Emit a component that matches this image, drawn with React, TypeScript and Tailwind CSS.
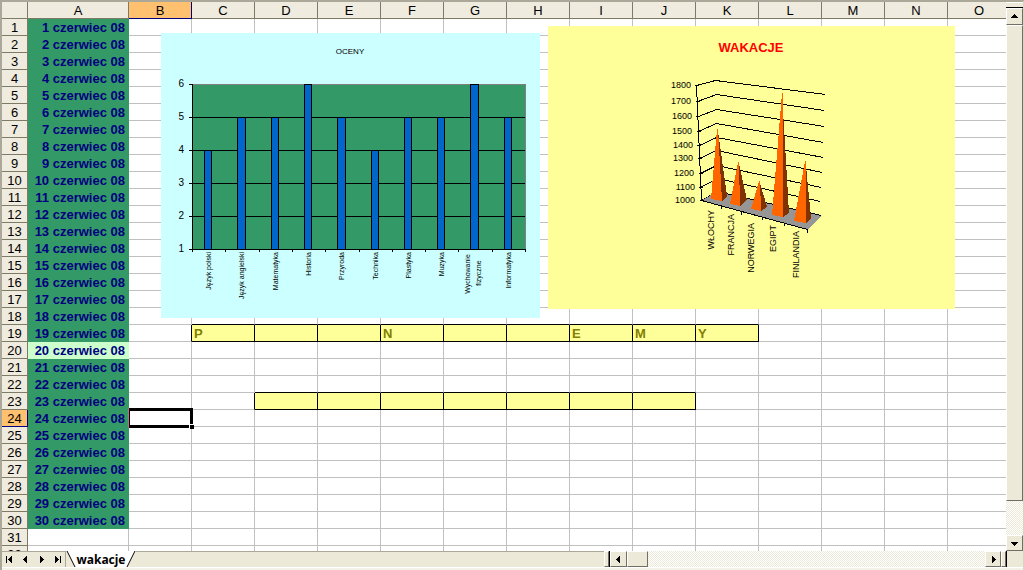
import React from 'react';
import clsx from 'clsx';

const columns = ['A', 'B', 'C', 'D', 'E', 'F', 'G', 'H', 'I', 'J', 'K', 'L', 'M', 'N', 'O'];
const rows = Array.from({ length: 32 }, (_, i) => i + 1);

const letters: Record<string, string> = { C19: 'P', F19: 'N', I19: 'E', J19: 'M', K19: 'Y' };

const grades = [
  { name: 'Język polski', value: 4 },
  { name: 'Język angielski', value: 5 },
  { name: 'Matematyka', value: 5 },
  { name: 'Historia', value: 6 },
  { name: 'Przyroda', value: 5 },
  { name: 'Technika', value: 4 },
  { name: 'Plastyka', value: 5 },
  { name: 'Muzyka', value: 5 },
  { name: 'Wychowanie fizyczne', value: 6 },
  { name: 'Informatyka', value: 5 },
];

// left end, back corner and right end of every grid line
const priceLines = [
  { label: 1800, labelX: 31, y: 15, line: 'M36 15 L55 10 L165 24' },
  { label: 1700, labelX: 31, y: 31, line: 'M37 31 L56 24 L164 40' },
  { label: 1600, labelX: 32, y: 46, line: 'M38 46 L56 39 L164 56' },
  { label: 1500, labelX: 32, y: 61, line: 'M38 61 L56 53 L163 72' },
  { label: 1400, labelX: 33, y: 75, line: 'M39 75 L56 67 L163 87' },
  { label: 1300, labelX: 33, y: 88, line: 'M39 88 L56 80 L162 102' },
  { label: 1200, labelX: 34, y: 103, line: 'M40 103 L56 95 L161 117' },
  { label: 1100, labelX: 35, y: 117, line: 'M40 117 L57 108 L160 131' },
  { label: 1000, labelX: 35, y: 130, line: 'M41 130 L57 121 L160 145' },
];

const pyramids = [
  { front: '57,59 58,59 62,131 51,129', side: '58,61 62,131 67,126' },
  { front: '78,92 79,92 80,136 70,134', side: '79,94 80,136 87,130' },
  { front: '99,111 100,111 101,141 91,139', side: '100,113 101,141 107,137' },
  { front: '122,23 123,23 123,147 112,145', side: '123,40 123,147 129,143' },
  { front: '145,91 146,91 146,153 134,151', side: '146,96 146,153 151,148' },
];

const places = [
  { name: 'WŁOCHY', x: 54, y: 140 },
  { name: 'FRANCJA', x: 74, y: 144 },
  { name: 'NORWEGIA', x: 94, y: 153 },
  { name: 'EGIPT', x: 116, y: 155 },
  { name: 'FINLANDIA', x: 139, y: 161 },
];

function inBand(col: number, row: number) {
  return (row === 19 && col >= 2 && col <= 10) || (row === 23 && col >= 3 && col <= 9);
}

function Cell({ col, row }: { col: number; row: number }) {
  if (col === 0) {
    const dated = row <= 30;
    return (
      <td
        className={clsx(
          'h-[17px] border-r border-b p-0 pt-[2px] pr-[3px] text-right font-bold whitespace-nowrap text-[#000080]',
          dated && row !== 20 && 'border-[#339966] bg-[#339966]',
          row === 20 && 'border-[#ccffcc] bg-[#ccffcc]',
          !dated && 'border-[#c0c0c0]'
        )}
      >
        {dated && `${row} czerwiec 08`}
      </td>
    );
  }
  const band = inBand(col, row);
  return (
    <td
      className={clsx(
        'h-[17px] border-r border-b p-0 pt-[2px] pl-[2px] text-left font-bold text-[#808000]',
        band && 'bg-[#ffff99]',
        band || inBand(col + 1, row) ? 'border-r-black' : 'border-r-[#c0c0c0]',
        band || inBand(col, row + 1) ? 'border-b-black' : 'border-b-[#c0c0c0]',
        col === 1 && row === 24 && 'relative'
      )}
    >
      {letters[columns[col] + row]}
      {col === 1 && row === 24 && (
        <span className="absolute -top-[2px] -right-[2px] -bottom-[2px] left-0 z-10 border-y-[3px] border-r-[3px] border-l border-black shadow-[-1px_0_0_#c8648c]">
          <span className="absolute -right-[4px] -bottom-[4px] size-[5px] border-t border-l border-white bg-black" />
        </span>
      )}
    </td>
  );
}

function Sheet() {
  return (
    <table className="w-[1009px] table-fixed border-separate border-spacing-0 text-[13px] leading-[14px]">
      <colgroup>
        <col className="w-[26px]" />
        <col className="w-[101px]" />
        {columns.slice(1).map(c => (
          <col key={c} className="w-[63px]" />
        ))}
      </colgroup>
      <thead>
        <tr>
          <th className="h-[17px] border-r border-b border-[#7d7b66] bg-[#efebde] p-0" />
          {columns.map(c => (
            <th
              key={c}
              className={clsx(
                'h-[17px] border-r border-b p-0 pt-[2px] text-center font-normal',
                c === 'B' ? 'border-[#000080] bg-[#ffc070]' : 'border-[#7d7b66] bg-[#efebde]'
              )}
            >
              {c}
            </th>
          ))}
        </tr>
      </thead>
      <tbody>
        {rows.map(r => (
          <tr key={r}>
            <th
              className={clsx(
                'h-[17px] border-r border-b p-0 pt-[2px] text-center font-normal',
                r === 24 ? 'border-[#000080] bg-[#ffc070]' : 'border-[#7d7b66] bg-[#efebde]'
              )}
            >
              {r}
            </th>
            {columns.map((c, i) => (
              <Cell key={c} col={i} row={r} />
            ))}
          </tr>
        ))}
      </tbody>
    </table>
  );
}

function GradesChart() {
  return (
    <svg width="379" height="285" viewBox="161 33 379 285" className="absolute top-[31px] left-[159px] bg-[#ccffff]">
      <text x="350" y="54" fontSize="8" textAnchor="middle">OCENY</text>
      <g shapeRendering="crispEdges">
        <rect x="192" y="84" width="334" height="166" fill="#808080" />
        <rect x="193" y="85" width="332" height="164" fill="#339966" />
        {[1, 2, 3, 4, 5].map(v => (
          <rect key={v} x="192" y={249 - (v - 1) * 33} width="333" height="1" />
        ))}
        {[1, 2, 3, 4, 5, 6].map(v => (
          <rect key={v} x="189" y={249 - (v - 1) * 33} width="4" height="1" />
        ))}
        <rect x="192" y="84" width="1" height="166" />
        {Array.from({ length: 11 }, (_, i) => (
          <rect key={i} x={Math.round(192 + i * 33.3)} y="249" width="1" height="3" />
        ))}
        {grades.map((g, i) => {
          const x = Math.round(204 + i * 33.3);
          const y = 249 - (g.value - 1) * 33;
          const wide = (i % 4 === 0 && i > 0) || i === 1 ? 9 : 8;
          return (
            <g key={g.name}>
              <rect x={x} y={y} width={wide} height={250 - y} />
              <rect x={x + 1} y={y + 1} width={wide - 2} height={248 - y} fill="#0066cc" />
            </g>
          );
        })}
      </g>
      {[1, 2, 3, 4, 5, 6].map(v => (
        <text key={v} x="184" y={252 - (v - 1) * 33} fontSize="10" textAnchor="end">{v}</text>
      ))}
      {grades.map((g, i) => {
        const x = Math.round(211 + i * 33.3);
        const words = g.name === 'Wychowanie fizyczne' ? g.name.split(' ') : null;
        if (words) {
          return (
            <g key={g.name} fontSize="7" textAnchor="middle">
              <text transform={`translate(${x - 7} 274) rotate(-90)`}>{words[0]}</text>
              <text transform={`translate(${x + 4} 273) rotate(-90)`}>{words[1]}</text>
            </g>
          );
        }
        return (
          <text key={g.name} transform={`translate(${x} 252) rotate(-90)`} fontSize="7" textAnchor="end">
            {g.name}
          </text>
        );
      })}
    </svg>
  );
}

function HolidayChart() {
  return (
    <svg width="407" height="283" viewBox="0 0 407 283" className="absolute top-[24px] left-[546px] bg-[#ffff99]">
      <text x="203" y="26" fontSize="13" fontWeight="bold" fill="#ff0000" textAnchor="middle">WAKACJE</text>
      <g transform="translate(112 44)">
        <g shapeRendering="crispEdges" stroke="#000" fill="none" transform="translate(0.5 0.5)">
          {priceLines.map(p => (
            <path key={p.label} d={p.line} />
          ))}
          <polygon points="41,130 57,121 161,145 147,159" fill="#969696" stroke="none" />
          <path d="M36 15 L41 130 L147 159 M57 121 L161 145" />
          {priceLines.map((p, i) => (
            <path key={p.label} d={`M${34 + Math.round(i * 0.6)} ${p.y} h4`} />
          ))}
          <path d="M61 135 v3 M81 141 v3 M102 146 v3 M124 152 v3 M147 158 v4" />
        </g>
        <g shapeRendering="crispEdges">
          {pyramids.map(p => (
            <g key={p.front}>
              <polygon points={p.side} fill="#803300" />
              <polygon points={p.front} fill="#ff6600" />
            </g>
          ))}
        </g>
        {priceLines.map(p => (
          <text key={p.label} x={p.labelX} y={p.y + 3} fontSize="9" textAnchor="end">{p.label}</text>
        ))}
        {places.map(p => (
          <text key={p.name} transform={`translate(${p.x} ${p.y}) rotate(-90)`} fontSize="9" textAnchor="end">
            {p.name}
          </text>
        ))}
      </g>
    </svg>
  );
}

const raised = 'border border-t-white border-l-white border-r-[#716f64] border-b-[#716f64] bg-[#ece9d8]';
const track = 'bg-[repeating-conic-gradient(#ece9d8_0_25%,#ffffff_0_50%)] bg-[length:2px_2px]';

function Arrow({ d }: { d: string }) {
  return (
    <svg width="9" height="9" viewBox="0 0 9 9" shapeRendering="crispEdges">
      <path d={d} />
    </svg>
  );
}

function VerticalScroll() {
  return (
    <div className={clsx('flex w-[17px] shrink-0 flex-col', track)}>
      <div className="h-[5px] border-t border-white bg-[#ece9d8]" />
      <div className="h-px bg-black" />
      <button aria-label="Scroll up" className={clsx('flex h-[17px] items-center justify-center', raised)}>
        <Arrow d="M4 2h1v1h1v1h1v1h1v1H1V5h1V4h1V3h1z" />
      </button>
      <div className={clsx('min-h-0 flex-[476]', raised)} />
      <div className="min-h-0 flex-[34]" />
      <button aria-label="Scroll down" className={clsx('flex h-[16px] items-center justify-center', raised)}>
        <Arrow d="M1 3h7v1H7v1H6v1H5v1H4V6H3V5H2V4H1z" />
      </button>
    </div>
  );
}

const tabButtons = [
  { label: 'First sheet', d: 'M1 1h1v7H1z M7 1v7H6V7H5V6H4V5H3V4h1V3h1V2h1V1z' },
  { label: 'Previous sheet', d: 'M6 1v7H5V7H4V6H3V5H2V4h1V3h1V2h1V1z' },
  { label: 'Next sheet', d: 'M3 1v7h1V7h1V6h1V5h1V4H6V3H5V2H4V1z' },
  { label: 'Last sheet', d: 'M7 1h1v7H7z M2 1v7h1V7h1V6h1V5h1V4H5V3H4V2H3V1z' },
];

function BottomBar() {
  return (
    <div className="flex h-[16px] shrink-0 bg-[#ece9d8]">
      <div className="flex flex-[602] border-t border-[#aca899]">
        <div className="flex w-[64px] shrink-0 border-r border-[#aca899]">
          {tabButtons.map(b => (
            <button key={b.label} aria-label={b.label} className="flex h-full w-[16px] items-center justify-center">
              <Arrow d={b.d} />
            </button>
          ))}
        </div>
        <button className="relative -mt-px h-[16px] w-[70px] text-center font-['Noto_Sans',sans-serif] text-[12px] leading-[18px] font-bold">
          <svg className="absolute inset-0" width="70" height="16" viewBox="0 0 70 16">
            <path d="M0 0 L9 16 H61 L70 0 Z" fill="#fff" />
            <path d="M1 0 L9 16 M61 16 L69 0" stroke="#000" fill="none" />
          </svg>
          <span className="relative">wakacje</span>
        </button>
      </div>
      <div className={clsx('w-[5px] shrink-0', raised)} />
      <div className="w-px shrink-0 bg-black" />
      <div className={clsx('flex flex-[396]', track)}>
        <button aria-label="Scroll left" className={clsx('flex w-[17px] items-center justify-center', raised)}>
          <Arrow d="M6 1v7H5V7H4V6H3V5H2V4h1V3h1V2h1V1z" />
        </button>
        <div className={clsx('w-[21px]', raised)} />
        <div className="flex-1" />
        <button aria-label="Scroll right" className={clsx('flex w-[16px] items-center justify-center', raised)}>
          <Arrow d="M3 1v7h1V7h1V6h1V5h1V4H6V3H5V2H4V1z" />
        </button>
        <div className={clsx('w-[5px]', raised)} />
      </div>
      <div className="w-[17px] shrink-0 border-l border-black" />
    </div>
  );
}

function App() {
  return (
    <div className="flex h-screen flex-col overflow-hidden border-t-2 border-r border-l-2 border-[#aca899] border-r-[#d8d4c4] bg-[#f3f1e8] font-['Liberation_Sans',Arial,sans-serif] text-black">
      <div className="flex min-h-0 flex-1">
        <div className="relative min-w-0 flex-1 overflow-hidden bg-white">
          <Sheet />
          <GradesChart />
          <HolidayChart />
        </div>
        <VerticalScroll />
      </div>
      <BottomBar />
      <div className="h-[3px] shrink-0 border-t border-white" />
    </div>
  );
}

export default App;
